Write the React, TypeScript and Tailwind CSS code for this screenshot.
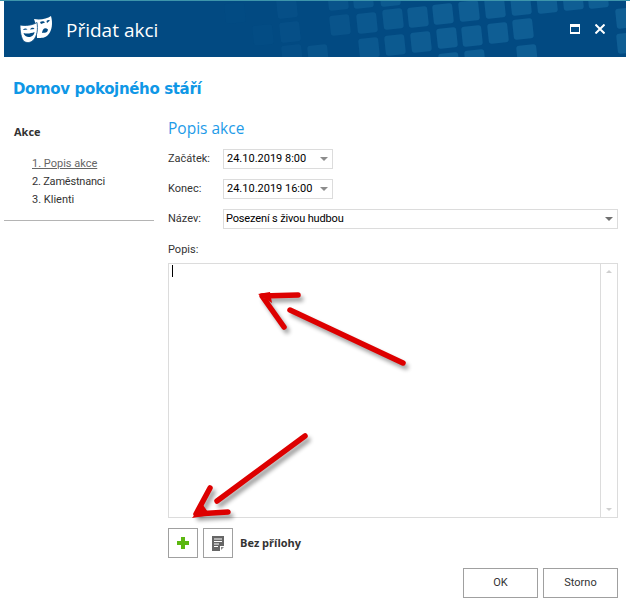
const tiles: [number, number, number][] = [
  [235, 13, 0.08], [263, 35, 0.12], [287, 8, 0.3], [290, 32, 0.3], [292, 55, 0.3], [318, 55, 0.5], [338, 0, 0.5], [340, 25, 0.5], [363, -2, 0.7], [367, 23, 0.7], [369, 48, 0.7],
  [390, -4, 0.8], [393, 19, 0.8], [395, 45, 0.8], [418, 17, 0.9], [421, 42, 0.9],
  [443, 14, 1], [469, 11, 1], [495, 8, 1], [521, 5, 1], [547, 3, 1], [573, 0, 1], [598, -2, 1], [626, 18, 1], [627, 43, 1],
  [447, 38, 1], [472, 36, 1], [498, 33, 1], [523, 29, 1], [449, 63, 1], [475, 60, 1], [527, 55, 1],
];
function Tiles() {
  return (
    <svg className="absolute inset-0" width="622" height="56" viewBox="4 1 622 56">
      {tiles.map(([x, y, o], i) => (
        <rect key={i} x={x - 10} y={y - 10} width="20" height="20" rx="3" fill="#0f5e94" opacity={o} transform={`rotate(-6 ${x} ${y})`} />
      ))}
    </svg>
  );
}
function Masks() {
  return (
    <svg width="36" height="30" viewBox="18 13 36 30">
      <path d="M34 18 C40 19 47 18 51 15 C53 22 52 30 48 34 C45 37 42 37 37 37 L36 24 Z" fill="#fff" />
      <path d="M20 24 C25 25 32 24.5 37 21.5 C38 28 37.5 35 33 39.5 C30 42 27 42 24 40.5 C21 37 20 30 20 24 Z" fill="#fff" stroke="#024a82" strokeWidth="0.8" />
      <path d="M23 29 C24 27 26.5 27 27.5 28.5 Z M30 28.5 C31 26.5 33.5 26 34.5 28 Z M23.5 32 C27 33 31 32.5 34.5 31 C34 37 25 38 23.5 32 Z" fill="#024a82" />
      <path d="M40 21 C42 20 44 20 45 21.5 L41 23 Z M46.5 20 C47.5 19 49 18.5 50 19.5 L47 22 Z M42 32 C42.5 27 45.5 26 48 28.5 C47 33 45 31 42 32 Z" fill="#024a82" />
    </svg>
  );
}
function Caret({ gray = false }: { gray?: boolean }) {
  return <span className={`w-0 h-0 border-x-[4px] border-x-transparent border-t-[4px] ${gray ? "border-t-[#8c8c8c]" : "border-t-[#707070]"}`} />;
}
function Arrows() {
  const p1 = "M403 363 L290 310 M298 295 L262 296 L284 327";
  const p2 = "M305 436 L217 501 M210 488 L196 514 L228 512";
  return (
    <svg className="absolute inset-0 pointer-events-none" width="630" height="607" viewBox="0 0 630 607" fill="none" strokeLinecap="round" strokeLinejoin="round">
      <defs>
        <filter id="b" x="-20%" y="-20%" width="140%" height="140%"><feGaussianBlur stdDeviation="2" /></filter>
      </defs>
      <g stroke="#000" opacity="0.4" strokeWidth="5" filter="url(#b)" transform="translate(3 4)">
        <path d={p1} /><path d={p2} />
      </g>
      <g stroke="#dd0000" strokeWidth="5.5">
        <path d={p1} /><path d={p2} />
      </g>
      <path d="M258 294 L270 292 L272 303 Z M192 518 L203 505 L210 515 Z" fill="#dd0000" />
    </svg>
  );
}
export default function App() {
  return (
    <div className="relative w-[630px] h-[607px] bg-white overflow-hidden text-[11px] text-[#333] font-['Roboto','Noto_Sans',sans-serif]">
      <div className="h-px bg-[#3d95ab]" />
      <header className="relative mx-1 w-[622px] h-[56px] bg-[#024a82] flex items-center pl-[14px] overflow-hidden">
        <Tiles />
        <div className="relative"><Masks /></div>
        <div className="relative ml-[12px] text-[19px] pt-[2px] text-white font-['Open_Sans',sans-serif]">Přidat akci</div>
        <div className="relative ml-auto mr-[21px] flex items-center gap-[15px]">
          <span className="w-[10px] h-[10px] border-x-[1px] border-white border-t-[3px] border-b-[2px] bg-[#024a82]" />
          <svg width="10" height="10" viewBox="0 0 10 10"><path d="M0.5 0.5 L9.5 9.5 M9.5 0.5 L0.5 9.5" stroke="#fff" strokeWidth="2" /></svg>
        </div>
      </header>
      <h1 className="mt-[22px] ml-[13px] text-[15px] leading-[20px] font-bold text-[#0f97e6] font-['DejaVu_Sans',sans-serif] tracking-[-0.35px]">Domov pokojného stáří</h1>
      <div className="flex mt-[19px]">
        <aside className="w-[150px] ml-1 shrink-0">
          <div className="mt-[6px] ml-[10px] font-bold text-[#333] leading-[16px] font-['Open_Sans',sans-serif]">Akce</div>
          <ol className="mt-[15px] ml-[28px] leading-[18px]">
            <li className="text-[#666] underline">1. Popis akce</li>
            <li className="text-[#333] tracking-[-0.2px]">2. Zaměstnanci</li>
            <li className="text-[#333]">3. Klienti</li>
          </ol>
          <div className="mt-[11px] h-px bg-[#b4b4b4]" />
        </aside>
        <main className="ml-[14px] w-[450px] flex flex-col">
          <h2 className="text-[15.5px] leading-[20px] text-[#1e9be8] font-['Open_Sans',sans-serif]">Popis akce</h2>
          <div className="mt-[11px] flex items-center h-[20px]">
            <span className="w-[55px]">Začátek:</span>
            <div className="w-[110px] h-[20px] border border-[#dcdcdc] flex items-center justify-between pl-[3px] pr-[4px] text-black"><span>24.10.2019 8:00</span><Caret gray /></div>
          </div>
          <div className="mt-[10px] flex items-center h-[20px]">
            <span className="w-[55px]">Konec:</span>
            <div className="w-[110px] h-[20px] border border-[#dcdcdc] flex items-center justify-between pl-[3px] pr-[4px] text-black"><span>24.10.2019 16:00</span><Caret gray /></div>
          </div>
          <div className="mt-[10px] flex items-center h-[20px]">
            <span className="w-[55px]">Název:</span>
            <div className="w-[395px] h-[20px] border border-[#dcdcdc] flex items-center justify-between pl-[2px] pr-[4px] text-black"><span className="tracking-[-0.15px]">Posezení s živou hudbou</span><Caret /></div>
          </div>
          <div className="mt-[13px] leading-[16px]">Popis:</div>
          <div className="mt-[5px] w-[450px] h-[255px] border border-[#dcdcdc] flex justify-between">
            <span className="ml-[3px] mt-[1px] w-px h-[12px] bg-black" />
            <div className="w-[17px] border-l border-[#dcdcdc] flex flex-col items-center justify-between py-[6px]">
              <span className="w-0 h-0 border-x-[3px] border-x-transparent border-b-[3px] border-b-[#cfcfcf]" />
              <span className="w-0 h-0 border-x-[3px] border-x-transparent border-t-[3px] border-t-[#cfcfcf]" />
            </div>
          </div>
          <div className="mt-[10px] flex items-center">
            <div className="w-[30px] h-[30px] border border-[#a0a0a0] flex items-center justify-center">
              <svg width="12" height="12" viewBox="0 0 12 12"><path d="M4 0h4v4h4v4H8v4H4V8H0V4h4z" fill="#5cb711" /></svg>
            </div>
            <div className="ml-[5px] w-[30px] h-[30px] border border-[#a0a0a0] flex items-center justify-center">
              <svg width="12" height="15" viewBox="0 0 12 15"><path d="M0 0h12v10H8v5H0z" fill="#666" /><path d="M2 3h8M2 5.5h8M2 8h5M2 10.5h4" stroke="#fff" strokeWidth="1" /><path d="M9 11h3l-3 3z" fill="#888" /></svg>
            </div>
            <span className="ml-[7px] font-bold text-[#333] font-['Open_Sans',sans-serif]">Bez přílohy</span>
          </div>
          <div className="mt-[10px] self-end flex gap-[5px]">
            <div className="w-[75px] h-[30px] border border-[#a0a0a0] flex items-center justify-center pt-[1px]">OK</div>
            <div className="w-[75px] h-[30px] border border-[#a0a0a0] flex items-center justify-center pt-[1px]">Storno</div>
          </div>
        </main>
      </div>
      <Arrows />
    </div>
  );
}
